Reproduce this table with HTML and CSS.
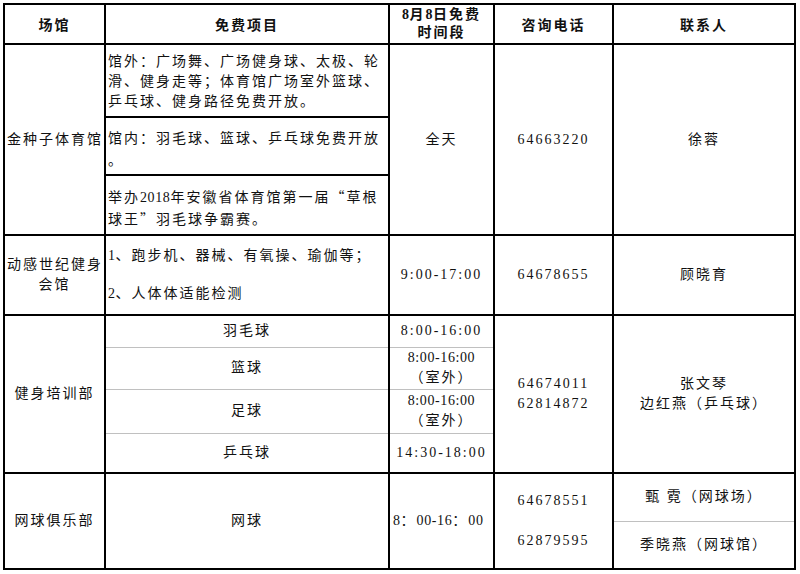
FILE: index.html
```html
<!DOCTYPE html>
<html lang="zh-CN">
<head>
<meta charset="utf-8">
<title>免费开放</title>
<link rel="stylesheet" href="styles.css">
</head>
<body>
<div class="sheet">
<table class="grid">
  <colgroup>
    <col class="c1"><col class="c2"><col class="c3"><col class="c4"><col class="c5">
  </colgroup>
  <tr class="h-head">
    <th>场馆</th>
    <th>免费项目</th>
    <th class="two"><span class="num">8</span>月<span class="num">8</span>日免费<br>时间段</th>
    <th>咨询电话</th>
    <th>联系人</th>
  </tr>
  <tr class="h-1a">
    <td rowspan="3" class="venue nowrap">金种子体育馆</td>
    <td class="left p1a">馆外：广场舞、广场健身球、太极、轮<br>滑、健身走等；体育馆广场室外篮球、<br>乒乓球、健身路径免费开放。</td>
    <td rowspan="3">全天</td>
    <td rowspan="3" class="num">64663220</td>
    <td rowspan="3">徐蓉</td>
  </tr>
  <tr class="h-1b">
    <td class="left p1b">馆内：羽毛球、篮球、乒乓球免费开放<br>。</td>
  </tr>
  <tr class="h-1c">
    <td class="left p1c">举办<span class="num">2018</span>年安徽省体育馆第一届<span class="cjk">“</span>草根<br>球王<span class="cjk">”</span>羽毛球争霸赛。</td>
  </tr>
  <tr class="h-2">
    <td class="venue nowrap">动感世纪健身<br>会馆</td>
    <td class="left"><div class="para"><span class="num">1</span>、跑步机、器械、有氧操、瑜伽等；</div><div class="para"><span class="num">2</span>、人体体适能检测</div></td>
    <td class="num">9:00-17:00</td>
    <td class="num">64678655</td>
    <td>顾晓育</td>
  </tr>
  <tr class="h-3a">
    <td rowspan="4" class="venue">健身培训部</td>
    <td class="gb">羽毛球</td>
    <td class="gb num">8:00-16:00</td>
    <td rowspan="4" class="num">64674011<br>62814872</td>
    <td rowspan="4">张文琴<br>边红燕（乒乓球）</td>
  </tr>
  <tr class="h-3b">
    <td class="gt gb">篮球</td>
    <td class="gt gb"><span class="num">8:00-16:00</span><br>（室外）</td>
  </tr>
  <tr class="h-3c">
    <td class="gt gb">足球</td>
    <td class="gt gb"><span class="num">8:00-16:00</span><br>（室外）</td>
  </tr>
  <tr class="h-3d">
    <td class="gt">乒乓球</td>
    <td class="gt num">14:30-18:00</td>
  </tr>
  <tr class="h-4a">
    <td rowspan="2" class="venue">网球俱乐部</td>
    <td rowspan="2">网球</td>
    <td rowspan="2" class="nowrap tight"><span class="num">8</span>：<span class="num">00-16</span>：<span class="num">00</span></td>
    <td rowspan="2" class="num phones">64678551<br>62879595</td>
    <td class="gb">甄 霓（网球场）</td>
  </tr>
  <tr class="h-4b">
    <td class="gt">季晓燕（网球馆）</td>
  </tr>
</table>
</div>
</body>
</html>
```

FILE: styles.css
```css
html, body {
  margin: 0;
  padding: 0;
  background: #ffffff;
}

.sheet {
  padding: 3px 0 0 3px;
}

.grid {
  border-collapse: collapse;
  table-layout: fixed;
  width: 793px;
  font-family: "Liberation Serif", "Noto Sans CJK SC", serif;
  font-size: 14px;
  color: #111;
}

.c1 { width: 101px; }
.c2 { width: 284px; }
.c3 { width: 105px; }
.c4 { width: 119px; }
.c5 { width: 182px; }

.grid th,
.grid td {
  border: 2px solid #000;
  padding: 0 2px;
  text-align: center;
  vertical-align: middle;
  line-height: 20px;
  letter-spacing: 2px;
  overflow: visible;
}

.grid th {
  font-weight: bold;
  padding-top: 3px;
}

.grid th.two {
  padding-top: 0;
  line-height: 18px;
}

.num {
  letter-spacing: 0.6px;
}

.cjk {
  font-family: "Noto Sans CJK SC", sans-serif;
}

.nowrap {
  white-space: nowrap;
}

.venue {
  padding: 0 1px;
}

.left {
  text-align: left !important;
  white-space: nowrap;
}

.p1a { padding-top: 3px !important; }
.p1b { padding-top: 8px !important; line-height: 22px !important; }
.p1c { padding-top: 5px !important; }

.para + .para {
  margin-top: 18px;
}

.tight {
  letter-spacing: 0;
  padding: 0 0 0 3px !important;
  text-align: left !important;
}

.phones {
  line-height: 40px !important;
}

.grid td.gt { border-top: 1px solid #c0c0c0; }
.grid td.gb { border-bottom: 1px solid #c0c0c0; }

.h-head { height: 40px; }
.h-1a { height: 73px; }
.h-1b { height: 58px; }
.h-1c { height: 60px; }
.h-2 { height: 80px; }
.h-3a { height: 32px; }
.h-3b { height: 42px; }
.h-3c { height: 44px; }
.h-3d { height: 40px; }
.h-4a { height: 48px; }
.h-4b { height: 48px; }
```
